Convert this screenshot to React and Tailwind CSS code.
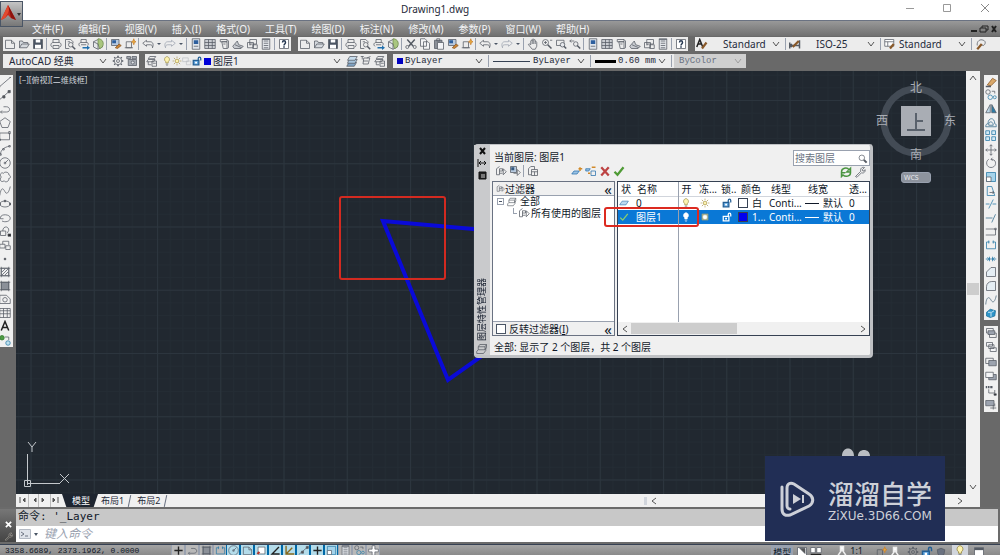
import { useState } from "react";

const glyphs = {
  new: <path d="M2 3h8l4 4v7H2zM10 3v4h4" />,
  open: <path d="M2 13V4h4l1 2h6v2M2 13l3-5h10l-3 5z" fill="#d5d9de" />,
  save: (
    <>
      <path d="M2 2h12v12H2z" fill="#4b5563" />
      <path d="M5 2h6v4H5zM4 9h8v5H4z" fill="#fff" stroke="none" />
    </>
  ),
  print: <path d="M4 6V2h8v4M3 12c-3-1-2-6 1-6h8c3 0 4 5 1 6M4 10h8v4H4z" />,
  preview: (
    <>
      <path d="M7 14H2V2h7l3 3v2M5 5h3" />
      <circle cx="9" cy="9" r="3" />
      <path d="M11 11l4 4" strokeWidth="2" />
    </>
  ),
  plot: (
    <>
      <path d="M4 6V2h7v4M3 11c-3-1-2-5 1-5h8c2 0 2 3 1 4M4 9h7" />
      <path d="M6 12h6v-2l4 3-4 3v-2H6z" fill="#1f6fae" stroke="none" />
    </>
  ),
  pie: (
    <>
      <path d="M2 5l6-3 6 3v7l-6 3-6-3z" fill="#e6e8ea" />
      <path d="M8 1c9 0 9 12 2 13L8 8z" fill="#a9c67f" stroke="#6f8c4f" />
      <path d="M2 5l6 3v7" />
    </>
  ),
  match: (
    <>
      <path d="M2 2h10v8H2z" fill="#b8c9de" />
      <path d="M3 3h5v4H3z" fill="#2d5f9e" stroke="none" />
      <path d="M7 13l5-5 3 2-5 4z" fill="#c98232" stroke="#8a5a2a" />
    </>
  ),
  block: (
    <>
      <path d="M3 5h7v8H3zM1 13h11" />
      <path d="M13 1l1 3 2 1-2 1-1 3-1-3-2-1 2-1z" fill="#e5a83b" stroke="#c98232" />
    </>
  ),
  undo: <path d="M6 3L1 7l5 4V9h5c2 0 3 1 3 4 2-5 0-8-3-8H6z" fill="#eee" />,
  redo: <path d="M10 3l5 4-5 4V9H5c-2 0-3 1-3 4-2-5 0-8 3-8h5z" stroke="#9ca3af" fill="#eee" />,
  props: (
    <>
      <path d="M3 1h10v14H3z" fill="#dfe5ec" />
      <path d="M5 3h6v5H5z" fill="#2d5f9e" stroke="none" />
      <path d="M5 11h6" />
    </>
  ),
  grid: (
    <>
      <path d="M1 2h14v12H1z" fill="#c9ccd1" />
      <path d="M1 6h14M1 10h14M6 2v12M11 2v12" />
    </>
  ),
  palette: <path d="M3 2h9v3H3zM5 5h7v9H7zM12 2l2 2v9l-2 1M7 8h3" />,
  sheet: <path d="M1 11l6-7 2 5 6 2-3 3H3zM4 9l9 4" fill="#c9ccd1" />,
  markup: <path d="M5 2h9v6H5zM2 6h8v7H2zM9 9h6v5H9zM4 9h3" />,
  calc: (
    <>
      <path d="M3 1h10v14H3z" fill="#e3e6ea" />
      <path d="M5 4h6M5 7h6M5 10h6M5 13h6M3 2h10" />
    </>
  ),
  help: (
    <>
      <path d="M2 2h12v12H2z" fill="#fff" />
      <path d="M6 6c0-3 4-3 4 0 0 2-2 2-2 4M8 11v2" stroke="#24364f" strokeWidth="2" />
    </>
  ),
  cut: (
    <>
      <path d="M3 2l8 9M13 2L5 11" strokeWidth="2" />
      <circle cx="3" cy="12" r="2" />
      <circle cx="13" cy="12" r="2" />
    </>
  ),
  copy: <path d="M2 1h6l2 2v8H2zM6 5h6l2 2v8H6z" fill="#f3f4f6" />,
  paste: (
    <>
      <path d="M2 3h10v11H2z" fill="#8b9098" />
      <path d="M6 6h8v9H6z" fill="#f3f4f6" />
      <path d="M5 1h4v3H5z" />
    </>
  ),
  hand: <path d="M5 9V4c1-2 2-1 2 0V2c1-1 2-1 2 0v1c1-1 2-1 2 0v2c1-1 2 0 2 1v5l-2 4H7L2 9c0-2 2-1 3 0zM7 4v4M9 3v5M11 5v3" />,
  zoom: (
    <>
      <circle cx="6" cy="6" r="4" />
      <path d="M9 9l5 5" strokeWidth="2" />
      <path d="M4 6h4M6 4v4M12 3h3" />
    </>
  ),
  zoomwin: (
    <>
      <path d="M2 3h10v7H2z" />
      <circle cx="10" cy="9" r="3" fill="#e5e7eb" />
      <path d="M12 11l3 3" strokeWidth="2" />
    </>
  ),
  zoomprev: (
    <>
      <circle cx="9" cy="8" r="3" />
      <path d="M11 10l4 4" strokeWidth="2" />
      <path d="M1 4h6M1 4l2-2M1 4l2 2" />
    </>
  ),
  textstyle: (
    <>
      <path d="M1 12L5 2l4 10M3 8h4" stroke="#222" strokeWidth="2" />
      <path d="M8 14l6-8" stroke="#8a5a2a" strokeWidth="3" />
    </>
  ),
  dimstyle: (
    <>
      <path d="M1 10h13M1 6v8M14 3v11M4 8l-3 2 3 2" strokeWidth="2" />
      <path d="M5 12l8-8" stroke="#8a5a2a" strokeWidth="3" />
    </>
  ),
  tablestyle: (
    <>
      <path d="M1 2h12v9H1zM1 5h12M5 5v6" fill="#fff" />
      <path d="M8 14l5-6" stroke="#8a5a2a" strokeWidth="3" />
    </>
  ),
  leader: (
    <>
      <path d="M3 10c-1-6 4-9 8-7 4 1 3 6 0 7l-3-1" />
      <path d="M3 15l6-7" stroke="#8a5a2a" strokeWidth="3" />
    </>
  ),
  gear: (
    <>
      <circle cx="8" cy="8" r="2" />
      <circle cx="8" cy="8" r="5" />
      <path d="M8 1v2M8 13v2M1 8h2M13 8h2M3 3l1 1M12 12l1 1M13 3l-1 1M4 12l-1 1" strokeWidth="2" />
    </>
  ),
  workspace: (
    <>
      <path d="M1 2h5v3H1zM8 2h6v3H8zM3 6h11v8H3z" fill="#a3a8af" />
      <circle cx="9" cy="10" r="2" fill="#e5e7eb" />
    </>
  ),
  layers: <path d="M5 2h8l-2 3H3zM3 6h9l-2 3H1zM8 8h6v7H8zM9 11h4M3 9v4h4" />,
  layers2: (
    <>
      <path d="M4 10h10l-3 5H1z" fill="#7fa3c4" />
      <path d="M4 6h11l-3 5H2z" fill="#a8c5dd" />
      <path d="M5 2h10l-3 5H2z" fill="#c7dcec" />
    </>
  ),
  stack: <path d="M5 2h9v4l-2 3H3V5zM3 9l-2 2v3h9l3-4V6M3 5h9l2-3M12 5v4" />,
  layerprev: <path d="M1 2h4M3 2v4M5 4h8l-2 8H4zM9 4l5-2M4 8h7" />,
  bulb: (
    <>
      <path d="M6 11V9C2 6 5 1 8 1s6 5 2 8v2z" fill="#fdf3b0" stroke="#8d7d34" />
      <path d="M6 13h4M7 15h2" />
    </>
  ),
  bulbOn: (
    <>
      <path d="M6 11V9C2 6 5 1 8 1s6 5 2 8v2z" fill="#fff" stroke="#fff" />
      <path d="M6 13h4M7 15h2" stroke="#fff" />
    </>
  ),
  sun: (
    <>
      <circle cx="8" cy="8" r="3" fill="#fdf3b0" stroke="#9a8430" />
      <path d="M8 1v2M8 13v2M1 8h2M13 8h2M3 3l2 2M11 11l2 2M13 3l-2 2M5 11l-2 2" stroke="#9a8430" />
    </>
  ),
  sunOn: (
    <>
      <path d="M3 3h10v10H3z" fill="#b3b58a" stroke="#6f8f8f" />
      <circle cx="8" cy="8" r="3" fill="#fff" stroke="#fff" />
    </>
  ),
  vpfreeze: <path d="M1 3h9v6H1zM7 8h7v6H7z" stroke="#b8bbc0" />,
  lock: (
    <>
      <path d="M2 7h9v7H2z" fill="#5fa3dc" stroke="#245f94" strokeWidth="2" />
      <path d="M10 7V4c0-3 4-3 4 0v3" stroke="#245f94" strokeWidth="2" />
      <path d="M5 9h3v3H5z" fill="#fff" stroke="none" />
    </>
  ),
  lockOn: (
    <>
      <path d="M2 7h9v7H2z" stroke="#fff" strokeWidth="2" />
      <path d="M10 7V4c0-3 4-3 4 0v3" stroke="#fff" strokeWidth="2" />
      <path d="M5 9h3v3H5z" fill="#fff" stroke="none" />
    </>
  ),
  line: <path d="M1 14L15 2M1 13v2M14 2h2" />,
  xline: (
    <>
      <path d="M1 14L15 2" />
      <path d="M5 9h3v3H5zM12 2h3v3h-3z" fill="#555" />
    </>
  ),
  pline: <path d="M2 12h8c6 0 5-7 0-7H6M2 12l2-2M2 12l2 2" />,
  polygon: <path d="M8 1l7 5-3 8H4L1 6z" />,
  rect: <path d="M1 4h13v9H1zM13 2h2v3h-2zM0 12h2v2H0z" />,
  arc: <path d="M2 14C2 8 7 4 14 3M1 13h2v2H1zM5 6h2v2H5zM13 2h2v2h-2z" />,
  circle: (
    <>
      <circle cx="8" cy="8" r="7" />
      <path d="M8 8l4-4M7 7h2v2H7z" />
    </>
  ),
  cloud: <path d="M3 8C0 5 3 1 6 3c2-3 8-1 7 2 3 1 3 5 0 5 1 4-5 6-6 3-4 3-7-1-4-5z" />,
  spline: <path d="M1 14C3 1 6 5 8 9s5 2 7-7" />,
  ellipse: (
    <>
      <ellipse cx="8" cy="8" rx="7" ry="4" />
      <path d="M7 3h2v2H7zM0 7h2v2H0zM14 7h2v2h-2z" fill="#555" />
    </>
  ),
  earc: <path d="M4 12c4 2 11 1 11-4 0-5-12-6-13-1v2h4" />,
  insert: (
    <>
      <path d="M2 8h7v6H2zM5 8c0-7 8-7 8-1l-2 4" />
      <path d="M12 12h4v3h-4z" fill="#222" />
    </>
  ),
  mkblock: <path d="M1 7h7v5H1zM5 7V3h8v5M9 9h6v5H9z" />,
  point: <path d="M7 7h2v2H7z" fill="#333" />,
  hatch: <path d="M3 3h10v10H3zM1 3h14M1 13h14M3 1v14M13 1v14M4 12l8-8M4 8l4-4M8 12l4-4" />,
  gradient: (
    <>
      <path d="M3 3h10v10H3z" fill="#8b9098" />
      <path d="M1 3h14M1 13h14M3 1v14M13 1v14" />
    </>
  ),
  region: (
    <>
      <path d="M1 3h9l5 5v6H1z" />
      <circle cx="8" cy="9" r="3" />
    </>
  ),
  table: <path d="M1 2h14v12H1zM1 5h14M1 9h14M6 2v12M11 2v12" />,
  mtext: <path d="M3 14L8 2l5 12M5 10h6" stroke="#222" strokeWidth="2" />,
  addsel: (
    <>
      <circle cx="4" cy="5" r="3" fill="#4f9b45" stroke="#2f7a2a" />
      <circle cx="12" cy="12" r="3" fill="#bfe0ee" stroke="#2d7ea8" />
      <path d="M8 4h5v4" />
    </>
  ),
  erase: (
    <>
      <path d="M3 12l7-9 5 3-7 7z" fill="#d9a86a" stroke="#8a5a2a" />
      <path d="M1 14h7" strokeWidth="2" />
    </>
  ),
  copyobj: (
    <>
      <circle cx="4" cy="4" r="3" />
      <circle cx="7" cy="11" r="3" stroke="#2d7ea8" />
      <circle cx="13" cy="11" r="2" stroke="#2d7ea8" />
      <path d="M9 3h4v3" />
    </>
  ),
  mirror: (
    <>
      <path d="M7 2v11H1z" fill="#bcd6e6" />
      <path d="M9 2v11h6z" fill="#2d7ea8" />
    </>
  ),
  offset: <path d="M1 13c0-3 1-4 3-4 0-9 9-9 9 0 2 0 2 2 2 4zM5 11c-1-6 6-6 6 0z" stroke="#336b8c" />,
  array: <path d="M1 1h5v5H1zM9 1h5v5H9zM1 9h5v5H1zM9 9h5v5H9z" fill="#d4eaf5" stroke="#2477a6" />,
  move: <path d="M8 1v14M1 8h14M6 3l2-2 2 2M6 13l2 2 2-2M3 6L1 8l2 2M13 6l2 2-2 2" />,
  rotate: <path d="M5 3C0 6 2 14 8 14s8-7 4-10l-4-1M10 1L8 3l2 2" />,
  scale: (
    <>
      <path d="M2 2h12v12H2z" fill="#a5d3ea" stroke="#2477a6" />
      <path d="M2 8h6v6H2z" fill="#fff" />
    </>
  ),
  stretch: (
    <>
      <path d="M3 14V2h6l4 12z" stroke="#2477a6" />
      <path d="M6 10h6M10 8l2 2-2 2" />
    </>
  ),
  trim: <path d="M1 8h5M10 8h5M5 14l6-12" stroke="#2477a6" />,
  extend: <path d="M1 8h9M9 14l5-11" stroke="#336b8c" />,
  brkpt: <path d="M1 4h13v8H1M13 3h2v2h-2z" />,
  brk: <path d="M6 4H2v9h12V4h-4M5 2v4M11 2v4" stroke="#2477a6" />,
  join: <path d="M1 8h14M6 5v6M10 5v6M3 6l3 2-3 2M13 6l-3 2 3 2" stroke="#2477a6" />,
  chamfer: <path d="M2 14V8l6-6h6v12z" fill="#e5eef4" />,
  fillet: <path d="M2 14V9c0-4 3-7 7-7h5v12z" fill="#e5eef4" />,
  blend: <path d="M1 14C2 2 6 4 8 8s5 4 7-6" stroke="#4d6a7c" />,
  explode: (
    <>
      <path d="M2 7l5-4 7 2-1 7-6 2-5-2z" fill="#2d94c8" stroke="#1b6d98" />
      <path d="M4 7h5l3-2M8 8v5" stroke="#fff" />
    </>
  ),
  order1: (
    <>
      <path d="M2 2h9v6H2zM6 8h9v6H6z" />
      <path d="M4 5h9v5H4z" fill="#9ca3af" />
    </>
  ),
  order2: <path d="M2 2h8v5H2zM7 9h8v5H7zM5 5h7v5H5z" fill="#f3f4f6" />,
  order3: (
    <>
      <path d="M1 3h10v7H1z" />
      <path d="M5 6h10v7H5z" fill="#9ca3af" />
    </>
  ),
  order4: (
    <>
      <path d="M5 6h10v7H5z" fill="#9ca3af" />
      <path d="M1 3h10v7H1z" fill="#f3f4f6" />
    </>
  ),
  order5: (
    <>
      <path d="M1 4h2M4 4h2M7 4h3" strokeWidth="3" />
      <path d="M5 7v5h8V8" />
      <path d="M12 13h3v2h-3z" fill="#222" />
    </>
  ),
  order6: (
    <>
      <path d="M1 2h11v7H1z" fill="#9ca3af" />
      <path d="M7 12h8M11 8v6M13 6v4" />
    </>
  ),
  filter: <path d="M6 2L2 5v8h4V5h4v3M6 8h4M6 11h4M11 5l4 4-4 4z" />,
  group: (
    <>
      <path d="M2 2h8v8H2z" fill="#b9cbe0" />
      <path d="M3 3h4v4H3z" fill="#35587f" stroke="none" />
      <path d="M6 11h5M11 6l4 4-4 4z" />
    </>
  ),
  state: <path d="M5 2L2 5v8h4M5 2h5v4M6 6h8v8H6zM6 9h8M10 9v5" />,
  newlayer: (
    <>
      <path d="M1 12l3-4h7l-3 4z" fill="#9cc3e4" stroke="#2a70ac" />
      <path d="M10 5h5M12 3v5" stroke="#d18a2a" strokeWidth="2" />
    </>
  ),
  newvp: (
    <>
      <path d="M1 5h6l-2 3H1z" fill="#9cc3e4" stroke="#2a70ac" />
      <path d="M8 8h6v6H8z" stroke="#2a70ac" />
      <path d="M9 3h5M4 11h3" stroke="#d18a2a" strokeWidth="2" />
    </>
  ),
  del: <path d="M3 3l10 11M13 3L3 14" stroke="#bd4343" strokeWidth="3" />,
  check: <path d="M2 9l4 4 8-10" stroke="#4f9b35" strokeWidth="3" />,
  checkOn: <path d="M2 9l4 4 8-10" stroke="#8fd06a" strokeWidth="2" />,
  refresh: <path d="M2 8c0-5 7-7 10-3l2-2v5H9l2-2M14 9c0 5-7 6-10 3l-2 2V9h5" stroke="#4a9440" strokeWidth="2" />,
  wrench: <path d="M2 14l7-7c-1-4 2-6 5-5l-3 3 1 2 3-2c0 4-3 5-5 4l-6 6z" />,
  search: (
    <>
      <circle cx="7" cy="7" r="4" />
      <path d="M10 10l4 4" strokeWidth="3" />
    </>
  ),
  sheetflat: <path d="M1 11l4-6h10l-4 6z" fill="#bcd9f0" stroke="#3572ad" />,
  cross: <path d="M8 2v12M2 8h12" stroke="#222" strokeWidth="2" />,
  plus: <path d="M6 1h4v5h5v4h-5v5H6v-5H1V6h5z" fill="#fff" />,
  angle: <path d="M13 3L3 13h11" stroke="#222" strokeWidth="2" />,
  axes: <path d="M3 1v12h12M3 13l9-9" stroke="#876a1e" strokeWidth="2" />,
  snapbox: (
    <>
      <path d="M3 3h10v10H3z" fill="#fff" />
      <path d="M2 13l3-3" stroke="#b8342a" strokeWidth="3" />
    </>
  ),
  person: <path d="M8 6l-6 9M8 6l6 9M6 2h4v5H6z" fill="#fff" stroke="#eee" strokeWidth="2" />,
  halfpage: (
    <>
      <path d="M2 2h12v12H2z" fill="#fff" />
      <path d="M5 3l7 7V3z" fill="#555" />
    </>
  ),
  views: (
    <>
      <path d="M1 2h6v7H1zM9 2h6v7H9z" fill="#fff" />
      <path d="M1 12h14" stroke="#222" strokeWidth="3" />
    </>
  ),
  shield: <path d="M3 5l5-2 5 2-1 6-4 3-4-3z" fill="#6b7280" />,
  window: (
    <>
      <path d="M2 2h12v12H2z" fill="#fff" />
      <path d="M2 4h12" strokeWidth="3" />
    </>
  ),
};

const Icon = ({ name, className = "size-3" }) => (
  <svg
    viewBox="0 0 16 16"
    fill="none"
    stroke="#555b64"
    className={`shrink-0 ${className}`}
    aria-hidden="true"
  >
    {glyphs[name]}
  </svg>
);

const Chevron = ({ className = "" }) => (
  <svg viewBox="0 0 8 8" fill="none" stroke="#555" className={`size-2 shrink-0 ${className}`} aria-hidden="true">
    <path d="M1 2l3 4 3-4" />
  </svg>
);

const Sep = () => <div className="mx-px h-3 w-0.5 shrink-0 border-l border-gray-400" />;

// "|" is a separator, "v" the small arrow beside undo and redo
const Tools = ({ items }) =>
  items.map((name, i) => {
    if (name === "|") return <Sep key={i} />;
    if (name === "v")
      return (
        <button key={i} type="button" aria-label="more" className="flex w-2 justify-center">
          <span className="border-x-2 border-t-2 border-x-transparent border-t-gray-600" />
        </button>
      );
    return (
      <button key={i} type="button" aria-label={name} className="flex h-[14px] w-[14px] shrink-0 items-center justify-center">
        <Icon name={name} />
      </button>
    );
  });

const Combo = ({ label, value, className, textClass = "", children, disabled }) => (
  <div className={`relative flex h-[14px] shrink-0 items-center ${className}`}>
    {children}
    <select
      aria-label={label}
      disabled={disabled}
      className={`h-full min-w-0 flex-1 appearance-none bg-transparent leading-[14px] outline-none ${textClass}`}
    >
      <option>{value}</option>
    </select>
    <Chevron className={`pointer-events-none absolute right-1 ${disabled ? "opacity-40" : ""}`} />
  </div>
);

const fileTools = ["new", "open", "save", "|", "print", "preview", "plot", "pie", "|"];
const paletteTools = ["|", "props", "grid", "palette", "sheet", "markup", "calc", "|", "help"];
const undoTools = ["|", "undo", "v", "redo", "v"];

const drawTools = [
  "line", "xline", "pline", "polygon", "rect", "arc", "circle", "cloud", "spline", "ellipse",
  "earc", "insert", "mkblock", "point", "hatch", "gradient", "region", "table", "mtext", "addsel",
];
const modifyTools = [
  "erase", "copyobj", "mirror", "offset", "array", "move", "rotate", "scale", "stretch",
  "trim", "extend", "brkpt", "brk", "join", "chamfer", "fillet", "blend", "explode",
];
const orderTools = ["order1", "order2", "order3", "order4", "order5", "order6"];

const menus = [
  "文件(F)", "编辑(E)", "视图(V)", "插入(I)", "格式(O)", "工具(T)",
  "绘图(D)", "标注(N)", "修改(M)", "参数(P)", "窗口(W)", "帮助(H)",
];

const layers = [
  { name: "0", color: "白", swatch: "bg-white", current: false },
  { name: "图层1", color: "1...", swatch: "bg-[#0000f0]", current: true },
];

const TitleBar = () => (
  <header className="relative h-5 shrink-0 bg-white">
    <h1 className="absolute left-[401px] top-0.5 text-[10px] leading-[14px] text-gray-800">Drawing1.dwg</h1>
    <div className="flex h-4 items-center justify-end gap-[26px] pr-[10px] text-gray-500">
      <button type="button" aria-label="minimize">
        <svg viewBox="0 0 10 10" className="size-[10px]" stroke="#999"><path d="M1 5.5h8" /></svg>
      </button>
      <button type="button" aria-label="maximize" className="ml-px">
        <svg viewBox="0 0 10 10" className="size-[10px]" fill="none" stroke="#999"><path d="M1.500 1.500h7v7h-7z" /></svg>
      </button>
      <button type="button" aria-label="close" className="ml-0.5">
        <svg viewBox="0 0 10 10" className="size-[10px]" stroke="#888"><path d="M1 1l8 8M9 1l-8 8" /></svg>
      </button>
    </div>
    <button
      type="button"
      aria-label="application menu"
      className="absolute left-0 top-px z-10 flex h-[26px] w-[23px] items-center border border-gray-600 bg-linear-to-b from-[#c4c4c4] to-[#777]"
    >
      <svg viewBox="0 0 21 24" className="h-6 w-[21px]">
        <path d="M0 18L7 3l8 15-5-2-3-3-3 3z" fill="#c5281c" />
        <path d="M7 3l8 15-5-2z" fill="#8d130d" />
        <path d="M0 18l4-2 3-5 1-3-1-5z" fill="#e2492f" />
        <path d="M16 11h4l-2 3z" fill="#333" />
      </svg>
    </button>
  </header>
);

const MenuBar = () => (
  <nav className="flex h-4 shrink-0 items-center justify-between border-t border-gray-500 bg-linear-to-b from-[#999] to-[#707070] pl-8 pr-0.5">
    <div className="flex gap-[15px]">
      {menus.map((m) => (
        <button key={m} type="button" className="whitespace-nowrap text-[10px] leading-4 text-gray-100">
          {m}
        </button>
      ))}
    </div>
    <svg viewBox="0 0 28 10" className="h-[10px] w-7" fill="none" stroke="#222">
      <path d="M1 7h6" strokeWidth="2" />
      <path d="M10 4h6v4h-6zM12 4V2h6v4h-2" />
      <path d="M22 2l4 6M26 2l-4 6" strokeWidth="2" />
    </svg>
  </nav>
);

const group = "flex h-[14px] items-center bg-[#ececec]";

const Toolbars = () => (
  <div className="flex shrink-0 flex-col gap-[3px] bg-[#696969] pb-[3px] pt-px text-[10px] text-gray-800">
    <div className="flex gap-[7px] pl-[3px]">
      <div className={group}>
        <Tools items={[...fileTools, "match", "block", ...undoTools, ...paletteTools]} />
      </div>
      <div className={group}>
        <Tools
          items={[
            ...fileTools, "cut", "copy", "paste", "match", "block", ...undoTools,
            "|", "hand", "zoom", "zoomwin", "zoomprev", ...paletteTools,
          ]}
        />
      </div>
      <div className={`${group} flex-1`}>
        <Tools items={["textstyle"]} />
        <Combo label="text style" value="Standard" className="w-[75px] pl-[14px]" />
        <Sep />
        <Tools items={["dimstyle"]} />
        <Combo label="dimension style" value="ISO-25" className="w-[77px] pl-[14px]" />
        <Sep />
        <Tools items={["tablestyle"]} />
        <Combo label="table style" value="Standard" className="w-[73px] pl-0.5" />
        <Sep />
        <Tools items={["leader"]} />
      </div>
    </div>

    <div className="flex gap-[6px] pl-[3px]">
      <div className={group}>
        <Combo label="workspace" value="AutoCAD 经典" className="w-[108px] pl-[6px]" />
        <Tools items={["gear", "workspace"]} />
      </div>
      <div className={group}>
        <Tools items={["layers"]} />
        <Combo label="layer" value="图层1" className="w-[186px] pl-[3px]">
          <Icon name="bulb" className="size-[10px]" />
          <Icon name="sun" className="size-[10px]" />
          <Icon name="vpfreeze" className="size-[10px]" />
          <Icon name="lock" className="size-[10px]" />
          <span className="mx-0.5 size-[7px] bg-[#0000d8]" />
        </Combo>
        <Tools items={["layers2", "layerprev", "layers"]} />
      </div>
      <div className={`${group} font-[Liberation_Mono,monospace] text-[9px]`}>
        <Combo label="color" value="ByLayer" className="w-[94px] gap-0.5 pl-1">
          <span className="size-[6px] bg-[#0000c0]" />
        </Combo>
        <Sep />
        <Combo label="linetype" value="ByLayer" className="w-[98px] gap-[3px] pl-0.5">
          <span className="h-px w-[37px] bg-gray-700" />
        </Combo>
        <Sep />
        <Combo label="lineweight" value="0.60 mm" className="w-[77px] gap-0.5 pl-0.5">
          <span className="h-[3px] w-[21px] bg-black" />
        </Combo>
        <Sep />
        <Combo label="plot style" value="ByColor" disabled className="w-[72px] bg-[#cfcfcf] pl-[5px]" textClass="text-gray-500" />
      </div>
    </div>
  </div>
);

const SideBar = ({ items, className }) => (
  <div className={`flex flex-col bg-[#f0f0f0] ${className}`}>
    {items.map((name) => (
      <button key={name} type="button" aria-label={name} className="flex flex-1 items-center justify-center">
        <Icon name={name} className="size-3" />
      </button>
    ))}
  </div>
);

const Compass = () => (
  <div className="absolute right-2 top-[6px] flex flex-col items-center">
    <svg viewBox="0 0 84 88" className="h-[88px] w-[84px]">
      <circle cx="42" cy="44" r="32" fill="none" stroke="#434b55" strokeWidth="7" />
      <path d="M27 29h30v30H27z" fill="#a9adb4" />
      <path d="M42 36v17M33 53h18M42 44h7" stroke="#59616c" fill="none" strokeWidth="2" />
      <g fill="#a9adb4" fontSize="12" textAnchor="middle">
        <text x="42" y="15">北</text>
        <text x="8" y="48">西</text>
        <text x="76" y="48">东</text>
        <text x="42" y="82">南</text>
      </g>
    </svg>
    <button
      type="button"
      className="mt-[7px] h-[11px] w-[30px] rounded-[3px] border border-gray-400 bg-[#8d939d] pl-0.5 text-left text-[7px] leading-[9px] text-gray-200"
    >
      WCS
    </button>
  </div>
);

const LayerTable = () => {
  const [selected, setSelected] = useState("图层1");

  return (
    <table className="h-full w-full table-fixed border-collapse text-left">
      <colgroup>
        <col className="w-4" />
        <col className="w-[44px]" />
        <col className="w-[18px]" />
        <col className="w-[22px]" />
        <col className="w-5" />
        <col className="w-[30px]" />
        <col className="w-[37px]" />
        <col className="w-[44px]" />
        <col />
      </colgroup>
      <thead>
        <tr className="h-[14px] border-b border-gray-300">
          {["状", "名称", "开", "冻...", "锁..", "颜色", "线型", "线宽", "透..."].map((h, i) => (
            <th
              key={h}
              className={`whitespace-nowrap p-0 font-normal ${i === 8 ? "" : "pl-[3px]"} ${i === 2 ? "border-l border-gray-400" : ""}`}
            >
              {h}
            </th>
          ))}
        </tr>
      </thead>
      <tbody>
        {layers.map((l) => {
          const on = selected === l.name;
          return (
            <tr
              key={l.name}
              onClick={() => setSelected(l.name)}
              className={`h-[14px] whitespace-nowrap ${on ? "bg-[#0a78d6] text-white" : ""}`}
            >
              <td className="p-0 pl-px">
                <Icon name={l.current ? "checkOn" : "sheetflat"} className="size-[10px]" />
              </td>
              <td className="p-0 pl-0.5">{l.name}</td>
              <td className="border-l border-gray-400 p-0 pl-0.5">
                <Icon name={on ? "bulbOn" : "bulb"} className="size-[10px]" />
              </td>
              <td className="p-0 pl-1"><Icon name={on ? "sunOn" : "sun"} className="size-[10px]" /></td>
              <td className="p-0 pl-1"><Icon name={on ? "lockOn" : "lock"} className="size-[10px]" /></td>
              <td className="p-0">
                <div className="flex items-center gap-1">
                  <span className={`size-[10px] border border-gray-700 ${l.swatch}`} />
                  {l.color}
                </div>
              </td>
              <td className="p-0 pl-px">Conti...</td>
              <td className="p-0">
                <div className="flex items-center gap-1">
                  <span className="h-px w-[14px] bg-current" />
                  默认
                </div>
              </td>
              <td className="p-0">0</td>
            </tr>
          );
        })}
        <tr>
          <td colSpan={2} />
          <td colSpan={7} className="border-l border-gray-400" />
        </tr>
      </tbody>
    </table>
  );
};

const LayerPalette = () => (
  <section className="absolute left-[458px] top-[73px] flex h-[214px] w-[399px] rounded-sm border-b-[3px] border-r-[3px] border-t border-[#bfc1c4] bg-[#f0f0f0] text-[10px] leading-3 text-gray-900">
    <div className="flex w-4 shrink-0 flex-col items-center bg-[#c9cacc] pt-[2px]">
      <svg viewBox="0 0 12 34" className="h-[34px] w-3" fill="none" stroke="#111">
        <path d="M4 1l5 6M9 1L4 7" strokeWidth="2" />
        <path d="M2 12v8M3 16h7M5 14l-2 2 2 2M8 14l2 2-2 2" />
        <path d="M3 25h7v7H3z" fill="#222" />
        <path d="M5 28h4M5 30h4" stroke="#ccc" />
      </svg>
      <span className="mt-auto rotate-180 whitespace-nowrap text-[9px] leading-3 [text-orientation:sideways] [writing-mode:vertical-rl]">
        图层特性管理器
      </span>
      <Icon name="stack" className="mt-0.5 size-3" />
    </div>

    <div className="flex min-w-0 flex-1 flex-col pl-[2px]">
      <div className="flex items-start justify-between">
        <div className="pl-0.5 pt-[6px]">
          <p>当前图层: 图层1</p>
          <div className="mt-px flex h-[14px] items-center">
            <Tools items={["filter", "group", "|", "state"]} />
            <span className="w-[30px]" />
            <Tools items={["newlayer", "newvp", "del", "check"]} />
          </div>
        </div>
        <div className="flex flex-col items-end pt-[5px]">
          <label className="flex h-4 w-[77px] items-center border border-gray-400 bg-white px-px">
            <input type="text" aria-label="搜索图层" placeholder="搜索图层" className="w-0 flex-1 leading-3 outline-none placeholder:text-gray-500" />
            <Icon name="search" className="size-[11px]" />
          </label>
          <div className="flex h-3 items-center pr-[3px]">
            <Tools items={["refresh", "wrench"]} />
          </div>
        </div>
      </div>

      <div className="mt-[3px] flex flex-1 gap-[2px]">
        <div className="flex w-[123px] shrink-0 flex-col border border-gray-500">
          <div className="flex h-[13px] items-center justify-between pl-[3px] pr-0.5">
            <span className="flex items-center">
              <Icon name="filter" className="size-[9px]" />过滤器
            </span>
            <button type="button" aria-label="collapse" className="text-[15px] leading-3">«</button>
          </div>
          <ul className="flex-1 border-y border-gray-400 bg-white pl-1 leading-[11px]">
            <li>
              <span className="flex items-center gap-[3px]">
                <span className="flex size-[7px] items-center justify-center border border-gray-400">
                  <span className="h-px w-[3px] bg-gray-600" />
                </span>
                <Icon name="stack" className="size-[10px]" />
                全部
              </span>
              <ul className="pl-4">
                <li className="flex items-center gap-px">
                  <span className="mb-1 h-[6px] w-1 border-b border-l border-gray-400" />
                  <Icon name="filter" className="size-3" />
                  所有使用的图层
                </li>
              </ul>
            </li>
          </ul>
          <div className="flex h-[13px] items-center justify-between pl-[3px] pr-0.5">
            <label className="flex items-center gap-[3px]">
              <input type="checkbox" className="size-[10px] appearance-none border border-gray-600 bg-white" />
              <span>反转过滤器(<u>I</u>)</span>
            </label>
            <button type="button" aria-label="collapse filters" className="text-[15px] leading-3">«</button>
          </div>
        </div>

        <div className="flex min-w-0 flex-1 flex-col border border-gray-700 bg-white">
          <div className="min-h-0 flex-1">
            <LayerTable />
          </div>
          <div className="flex h-[13px] shrink-0 items-center bg-[#f0f0f0]">
            <button type="button" aria-label="scroll left" className="flex w-[13px] justify-center">
              <Chevron className="rotate-90" />
            </button>
            <div className="h-[11px] w-[106px] bg-[#cdcdcd]" />
            <button type="button" aria-label="scroll right" className="ml-auto flex w-[13px] justify-center">
              <Chevron className="-rotate-90" />
            </button>
          </div>
        </div>
      </div>

      <p className="pb-[2px] pl-0.5 pt-[5px]">全部: 显示了 2 个图层，共 2 个图层</p>
    </div>
  </section>
);

const Canvas = () => (
  <div className="relative min-w-0 flex-1 overflow-hidden bg-[#212830]">
    <svg className="absolute inset-0 size-full" fill="none">
      <defs>
        <pattern id="minor" width="12.65" height="12.65" patternUnits="userSpaceOnUse" x="14.5" y="29">
          <path d="M0 .5h12.65M.5 0v12.65" stroke="#242c34" />
        </pattern>
        <pattern id="major" width="63.25" height="63.25" patternUnits="userSpaceOnUse" x="14.5" y="29">
          <path d="M0 .5h63.250M.5 0v63.250" stroke="#2c353e" />
        </pattern>
      </defs>
      <rect width="100%" height="100%" fill="url(#minor)" />
      <rect width="100%" height="100%" fill="url(#major)" />
      <path d="M560 167L367 150l65 159 110-78" stroke="#0a0ad8" strokeWidth="4" />
      <rect x="324" y="126" width="105" height="82" rx="2" stroke="#d32a20" strokeWidth="2" />
    </svg>

    <p className="absolute left-[3px] top-[3px] text-[8px] leading-3 text-gray-300">[−][俯视][二维线框]</p>

    <svg viewBox="0 0 50 50" className="absolute bottom-1 left-2 size-[50px]" fill="none" stroke="#c4c8cc">
      <path d="M3.500 14v31M3.500 43.500H36M.5 40.500h6v6h-6z" />
      <path d="M4 2l4 5 4-5M8 7v5M36 34l9 9M45 34l-9 9" />
    </svg>

    <Compass />
    <LayerPalette />
    <div className="absolute left-[588px] top-[136px] h-5 w-[95px] rounded-[3px] border-2 border-[#dc2a20]" />
  </div>
);

const LayoutTabs = () => (
  <div className="flex h-[13px] shrink-0 items-center bg-[#f0f0f0] text-[9px] leading-[13px] text-gray-800">
    <svg viewBox="0 0 46 13" className="h-[13px] w-[46px] shrink-0" fill="#555" stroke="#555">
      <path d="M9 4v4L7 6zM4 3v6M20 4v4l-2-2zM26 4v4l2-2zM37 4v4l2-2zM42 3v6" />
      <path d="M12.500 0v13M22.500 0v13M34.500 0v13" stroke="#bbb" />
    </svg>
    <button type="button" className="h-full w-9 bg-[#1e2530] pl-0.5 text-white [clip-path:polygon(0_0,100%_0,88%_100%,12%_100%)]">
      模型
    </button>
    <button type="button" className="ml-[3px]">布局1</button>
    <span className="ml-[5px] mr-[7px] h-3 w-px rotate-12 bg-gray-500" />
    <button type="button">布局2</button>
    <span className="ml-[5px] h-3 w-px rotate-12 bg-gray-500" />
    <div className="ml-auto flex w-[336px] items-center border-l-[3px] border-gray-300 pl-[3px]">
      <Chevron className="rotate-90" />
      <Chevron className="ml-auto mr-4 -rotate-90" />
    </div>
  </div>
);

const CommandLine = () => (
  <div className="flex h-[37px] shrink-0 bg-[#6b6b6b] pb-0.5 pr-0.5 pt-[2px]">
    <div className="flex w-4 shrink-0 flex-col items-center bg-linear-to-b from-[#777] to-[#444] pt-3">
      <button type="button" aria-label="close command line">
        <svg viewBox="0 0 8 8" className="size-[7px]" stroke="#fff" strokeWidth="2"><path d="M1 1l6 6M7 1L1 7" /></svg>
      </button>
      <Icon name="wrench" className="mt-1 size-[9px] invert" />
    </div>
    <div className="flex min-w-0 flex-1 flex-col">
      <p className="h-[17px] bg-[#c8c8c8] pl-[2px] font-[DejaVu_Sans_Mono,Noto_Sans_CJK_SC,monospace] text-[11px] leading-4 text-gray-900">
        命令: '_Layer
      </p>
      <label className="flex h-4 items-center bg-white pl-[3px]">
        <svg viewBox="0 0 12 10" className="h-[10px] w-3" fill="#dfe3ea" stroke="#6b7280">
          <path d="M.5.5h11v9H.5z" stroke="#b4bac4" />
          <path d="M2 3l3 2-3 2M6 7h3" fill="none" />
        </svg>
        <span className="ml-[3px] border-x-2 border-t-[3px] border-x-transparent border-t-gray-600" />
        <input
          type="text"
          aria-label="命令"
          placeholder="键入命令"
          className="ml-[6px] h-4 flex-1 text-xs italic leading-4 outline-none placeholder:text-gray-400"
        />
      </label>
    </div>
  </div>
);

const toggles = [
  ["cross", false], ["pline", false], ["gradient", false], ["brk", false], ["circle", true],
  ["new", true], ["snapbox", true], ["angle", true], ["axes", true], ["xline", true],
  ["cross", true], ["scale", true], ["calc", false], ["copyobj", false], ["plus", false],
];

const StatusBar = () => (
  <footer className="flex h-[11px] shrink-0 items-start overflow-hidden border-t border-gray-700 bg-linear-to-b from-[#a3a3a3] to-[#8a8a8a] text-gray-900">
    <span className="w-[171px] whitespace-pre pl-[5px] font-[Liberation_Mono,monospace] text-[8px] leading-3">
      3358.6689, 2373.1962, 0.0000
    </span>
    <div className="flex">
      {toggles.map(([name, on], i) => (
        <button
          key={i}
          type="button"
          aria-label={`${name} ${i}`}
          aria-pressed={on}
          className={`flex h-4 w-[14px] justify-center border-x ${i === 4 ? "-ml-px" : ""} ${on ? "border-sky-700 bg-[#b4dcea]" : "border-gray-400 bg-[#b9b9b9]"}`}
        >
          <Icon name={name} className="size-[11px]" />
        </button>
      ))}
    </div>
    <div className="ml-auto mr-[14px] flex text-[9px] leading-[11px]">
      <button type="button" className="mr-0.5 w-[22px] bg-gray-400">模型</button>
      <Tools items={["halfpage", "views"]} />
      <span className="w-[13px]" />
      <button type="button" className="mr-[11px] flex gap-0.5"><Icon name="person" />1:1</button>
      <Tools items={["block", "person"]} />
      <span className="w-1" />
      <Tools items={["gear", "lock", "shield"]} />
      <span className="mx-1 flex bg-gray-300 px-0.5">
        <Icon name="bulb" className="size-3" />
      </span>
      <Tools items={["window"]} />
    </div>
  </footer>
);

const Watermark = () => (
  <div className="absolute bottom-[14px] right-[55px] z-20 flex h-[85px] w-[180px] items-center gap-3 bg-[#212e55] pl-[14px] text-[#cdd0d8]">
    <svg viewBox="0 0 36 8" className="absolute -top-2 left-[76px] h-2 w-9" fill="#b9bdc2">
      <path d="M1 8c0-10 12-10 12 0zM17 8c0-8 12-8 12 0z" />
    </svg>
    <svg
      viewBox="0 0 37 38"
      className="h-[38px] w-[37px] shrink-0"
      fill="none"
      stroke="currentColor"
      strokeWidth="3"
      strokeLinecap="round"
    >
      <path d="M3 7v22c0 6 4 7 8 6l19-9c5-3 5-9 0-12L15 4C11 2 8 4 8 8v18c0 2 2 3 3 3" />
      <path d="M14 14v10l8-5z" fill="currentColor" stroke="none" />
      <path d="M24 15v8" strokeWidth="2" strokeLinecap="butt" />
    </svg>
    <div className="pt-0.5">
      <p className="text-[26px] font-medium leading-8">溜溜自学</p>
      <p className="font-[DejaVu_Sans,sans-serif] text-[12px] leading-3">ZiXUe.3D66.COM</p>
    </div>
  </div>
);

const App = () => {
  return (
    <div className="relative flex h-screen flex-col overflow-hidden bg-[#696969] font-[Noto_Sans,Noto_Sans_CJK_SC,sans-serif]">
      <TitleBar />
      <MenuBar />
      <Toolbars />

      <main className="flex min-h-0 flex-1">
        <aside className="w-4 shrink-0 pr-[3px] pt-1">
          <SideBar items={drawTools} className="h-[272px] pr-[3px]" />
        </aside>

        <div className="flex min-w-0 flex-1 flex-col">
          <div className="flex min-h-0 flex-1">
            <Canvas />
            <div className="flex w-[14px] shrink-0 flex-col items-center bg-[#f0f0f0] py-[3px]">
              <Chevron className="rotate-180" />
              <div className="mt-[201px] h-3 w-3 bg-[#cdcdcd]" />
              <Chevron className="mt-auto" />
            </div>
          </div>
          <LayoutTabs />
        </div>

        <aside className="flex w-5 shrink-0 flex-col gap-[6px] pl-1 pr-0.5 pt-1">
          <SideBar items={modifyTools} className="h-[245px]" />
          <SideBar items={orderTools} className="h-[86px]" />
        </aside>
      </main>

      <CommandLine />
      <StatusBar />
      <Watermark />
    </div>
  );
};

export default App;
